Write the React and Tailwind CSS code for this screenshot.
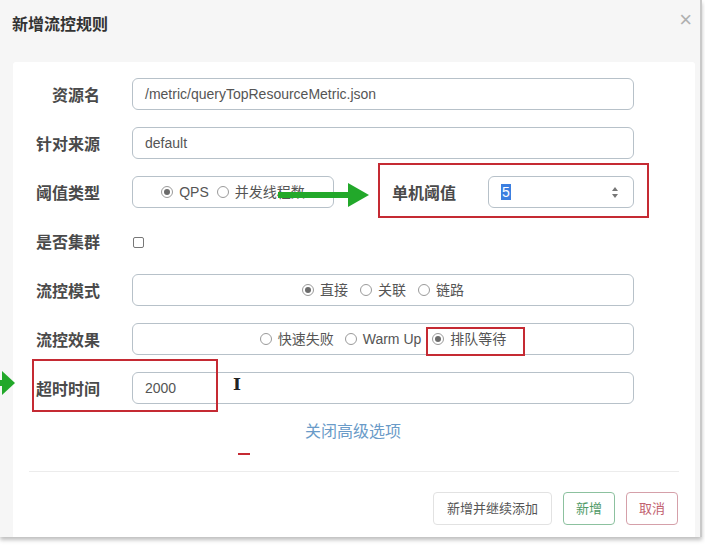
import React from 'react'

const FONT = { fontFamily: '"Liberation Sans", "Noto Sans CJK SC", Arial, sans-serif' }

// little radio dot used in the option groups
function Radio({ checked, label }) {
  return (
    <span className="inline-flex items-center gap-[6px]">
      <span className="w-[12px] h-[12px] rounded-full border border-[#9a9a9a] bg-white flex items-center justify-center">
        {checked && <span className="w-[6px] h-[6px] rounded-full bg-[#6b6b6b]" />}
      </span>
      <span>{label}</span>
    </span>
  )
}

function Row({ label, children }) {
  return (
    <div className="flex items-center h-8">
      <div className="w-[80px] text-right text-base font-bold text-[#4a4a4a] pt-[3px]">{label}</div>
      <div className="ml-8 flex items-center h-8">{children}</div>
    </div>
  )
}

function Box({ className = '', children }) {
  return (
    <div className={`h-8 rounded-[6px] border border-[#b7c1c9] bg-white flex items-center text-sm text-[#555] ${className}`}>
      {children}
    </div>
  )
}

function GreenArrow({ className }) {
  return (
    <svg className={className} width="92" height="26" viewBox="0 0 92 26">
      <rect x="0" y="10" width="74" height="6" fill="#22a82a" />
      <path d="M70 1 L91 13 L70 25 Z" fill="#22a82a" />
    </svg>
  )
}

export default function App() {
  return (
    <div className="w-[705px] h-[545px] bg-white overflow-hidden relative" style={FONT}>
      <div className="w-[702px] h-[537px] bg-[#f6f6f6] border-r-2 border-[#c9c9c9] shadow-[0_3px_4px_rgba(0,0,0,0.25)] flex flex-col">
        {/* title bar */}
        <div className="h-[62px] shrink-0 flex items-start justify-between pl-3 pr-[8px] pt-[15px]">
          <h2 className="text-base font-bold text-[#333] leading-5">新增流控规则</h2>
          <span className="text-[22px] leading-none text-[#b0b0b0] -mt-[6px]">×</span>
        </div>

        {/* form body */}
        <div className="ml-[13px] w-[682px] flex-1 bg-white rounded-t-[3px] flex flex-col relative">
          <div className="pt-4 pl-[7px] flex flex-col gap-[17px]">
            <Row label="资源名">
              <Box className="w-[502px] px-3">/metric/queryTopResourceMetric.json</Box>
            </Row>
            <Row label="针对来源">
              <Box className="w-[502px] px-3">default</Box>
            </Row>
            <Row label="阈值类型">
              <Box className="w-[202px] justify-center gap-[8px]">
                <Radio checked label="QPS" />
                <Radio label="并发线程数" />
              </Box>
              <div className="ml-[58px] w-[80px] text-base font-bold text-[#4a4a4a] pt-[3px]">单机阈值</div>
              <Box className="ml-[16px] w-[146px] pl-3 pr-[15px] justify-between">
                <span className="bg-[#3c7fe0] text-white px-[1px] leading-4">5</span>
                <span className="flex flex-col items-center gap-[3px]">
                  <svg width="6" height="4" viewBox="0 0 6 4"><path d="M0 4 L3 0 L6 4 Z" fill="#777" /></svg>
                  <svg width="6" height="4" viewBox="0 0 6 4"><path d="M0 0 L3 4 L6 0 Z" fill="#777" /></svg>
                </span>
              </Box>
            </Row>
            <Row label="是否集群">
              <span className="w-[11px] h-[11px] ml-[1px] mt-[3px] rounded-[2px] border border-[#777] bg-white" />
            </Row>
            <Row label="流控模式">
              <Box className="w-[502px] justify-center gap-[12px]">
                <Radio checked label="直接" />
                <Radio label="关联" />
                <Radio label="链路" />
              </Box>
            </Row>
            <Row label="流控效果">
              <Box className="w-[502px] justify-center gap-[11px]">
                <Radio label="快速失败" />
                <Radio label="Warm Up" />
                <Radio checked label="排队等待" />
              </Box>
            </Row>
            <Row label="超时时间">
              <Box className="w-[502px] px-3">2000</Box>
            </Row>
          </div>

          <div className="mt-[18px] text-center text-base text-[#6a9bc8] leading-5 pr-[2px]">关闭高级选项</div>

          <div className="mt-[29px] mx-4 border-t border-[#ececec]" />

          <div className="flex justify-end gap-[11px] pr-[17px] pt-[20px]">
            <button className="h-[33px] px-[13px] rounded-[4px] border border-[#e2e2e2] bg-white text-[13px] text-[#555]">新增并继续添加</button>
            <button className="h-[33px] w-[52px] rounded-[4px] border border-[#8cc19f] bg-white text-[13px] text-[#4f9a66]">新增</button>
            <button className="h-[33px] w-[52px] rounded-[4px] border border-[#d5a0a9] bg-white text-[13px] text-[#c2616f]">取消</button>
          </div>
        </div>
      </div>

      {/* annotation marks drawn over the form */}
      <div className="absolute left-[378px] top-[163px] w-[271px] h-[55px] border-2 border-[#c52a33]" />
      <div className="absolute left-[426px] top-[327px] w-[99px] h-[29px] border-2 border-[#c52a33]" />
      <div className="absolute left-[32px] top-[359px] w-[186px] h-[53px] border-2 border-[#c52a33]" />
      <GreenArrow className="absolute left-[278px] top-[182px]" />
      <svg className="absolute left-0 top-[370px]" width="16" height="26" viewBox="0 0 16 26">
        <rect x="0" y="10" width="4" height="6" fill="#22a82a" />
        <path d="M2 1 L15 13 L2 25 Z" fill="#22a82a" />
      </svg>
      <span className="absolute left-[233px] top-[372px] text-[17px] font-bold text-[#222]" style={{ fontFamily: '"DejaVu Serif", serif' }}>I</span>
      <div className="absolute left-[238px] top-[453px] w-[12px] h-[2px] bg-[#c52a33]" />
    </div>
  )
}
